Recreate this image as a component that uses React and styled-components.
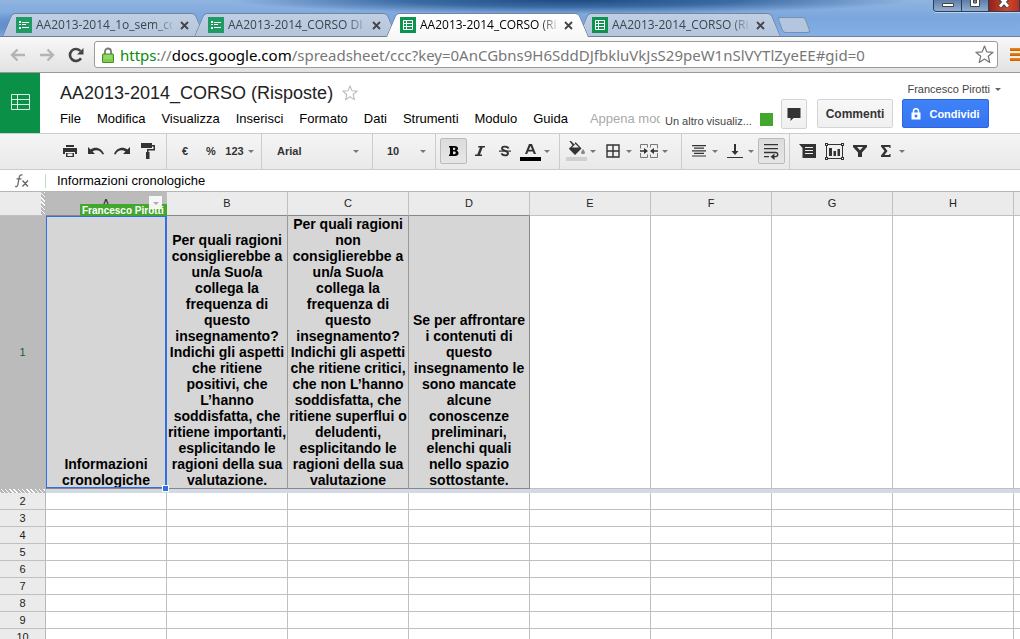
import React from "react";
import styled, { createGlobalStyle, css } from "styled-components";

const SANS = `"Liberation Sans", Arial, sans-serif`;
const UI = `"Open Sans", "Noto Sans", sans-serif`;

const Global = createGlobalStyle`
  * { box-sizing: border-box; }
  html, body { margin: 0; background: #fff; }
  body { font-family: ${SANS}; font-size: 13px; color: #000; }
  button, input, select { font: inherit; color: inherit; margin: 0; padding: 0; border: 0; background: none; }
  button { cursor: pointer; }
  svg { display: block; flex: none; }
  a { color: inherit; text-decoration: none; }
`;

const Page = styled.div`
  display: flex;
  flex-direction: column;
  height: 100vh;
  overflow: hidden;
`;

/* ---------- browser window ---------- */

const TabStrip = styled.header`
  display: flex;
  align-items: flex-end;
  height: 37px;
  flex: none;
  overflow: hidden;
  box-shadow: inset 0 -1px 0 #6d8098;
  background:
    radial-gradient(ellipse 340px 14px at 56% 0, #1d4a80 0, rgba(40, 90, 150, 0.8) 50%, rgba(60, 110, 170, 0) 100%),
    radial-gradient(ellipse 130px 14px at 5% 70%, rgba(50, 100, 165, 0.6), rgba(50, 100, 165, 0) 100%),
    linear-gradient(#91b4e0, #79a6de 50%, #86b0e6);
`;

const TabList = styled.ul`
  display: flex;
  margin: 0;
  padding: 0;
  list-style: none;
`;

const Tab = styled.li`
  position: relative;
  display: flex;
  align-items: center;
  width: 208px;
  height: 24px;
  margin-right: -16px;
  padding: 0 19px 0 16px;
  z-index: ${(p) => (p.$active ? 2 : 1)};
  font-family: ${UI};
  font-size: 12px;
  color: ${(p) => (p.$active ? "#000" : "#3d4450")};

  &::before,
  &::after {
    content: "";
    position: absolute;
    z-index: -1;
    top: 0;
    bottom: ${(p) => (p.$active ? 0 : 1)}px;
    border: 1px solid #75859b;
    border-bottom: 0;
    background: ${(p) => (p.$active ? "linear-gradient(#fff, #f8f8f8)" : "linear-gradient(#c0cfe2, #b4c5dc)")};
  }
  &::before {
    left: 7px;
    right: 50%;
    border-right: 0;
    border-radius: 4px 0 0 0;
    transform: skewX(-23deg);
  }
  &::after {
    left: calc(50% - 20px);
    right: 8px;
    border-left: 0;
    border-radius: 0 4px 0 0;
    transform: skewX(23deg);
  }
`;

const TabTitle = styled.a`
  flex: 1;
  margin: 0 8px 0 4px;
  overflow: hidden;
  white-space: nowrap;
  line-height: 20px;
  mask-image: linear-gradient(90deg, #000 calc(100% - 18px), rgba(0, 0, 0, 0.2));
`;

const TabClose = styled.button`
  display: grid;
  place-items: center;
  width: 9px;
  height: 16px;
`;

const NewTab = styled.button`
  align-self: flex-end;
  width: 28px;
  height: 16px;
  margin: 0 0 4px 12px;
  border: 1px solid #7890b0;
  border-radius: 3px;
  background: #b4c6de;
  transform: skewX(20deg);
`;

const WindowButtons = styled.div`
  display: flex;
  align-self: flex-start;
  height: 12px;
  margin-left: auto;
  border: 1px solid #2b3e58;
  border-width: 0 0 1px 1px;
  border-radius: 0 0 0 4px;
  overflow: hidden;
  box-shadow: 0 1px 0 rgba(255, 255, 255, 0.5);
`;

const WindowButton = styled.button`
  display: flex;
  justify-content: center;
  width: ${(p) => p.$w}px;
  border-right: 1px solid #2b3e58;
  background: ${(p) => (p.$close ? "linear-gradient(90deg, #8e2318, #d0472f 60%, #b8301d)" : "linear-gradient(#5d7ea8, #93add0)")};
`;

const NavBar = styled.nav`
  display: flex;
  align-items: center;
  height: 36px;
  flex: none;
  padding-left: 9px;
  border-bottom: 1px solid #999;
  background: linear-gradient(#f8f8f8, #e2e2e2);
`;

const NavButton = styled.button`
  display: grid;
  place-items: center;
  width: 18px;
  height: 24px;
  margin-right: ${(p) => p.$gap || 11}px;
`;

const Omnibox = styled.div`
  display: flex;
  align-items: center;
  flex: 1;
  min-width: 0;
  height: 27px;
  padding: 0 3px 0 7px;
  border: 1px solid #9b9b9b;
  border-radius: 3px;
  background: #fff;
  font-family: "Noto Sans", "Open Sans", sans-serif;
  font-size: 15px;
`;

const Url = styled.a`
  flex: 1;
  margin-left: 6px;
  overflow: hidden;
  white-space: nowrap;
  line-height: 24px;
  color: #777;
  b { font-weight: 400; color: #000; }
  i { font-style: normal; color: #0b8a0b; }
`;

const MenuButton = styled.button`
  display: flex;
  flex-direction: column;
  gap: 2px;
  width: 10px;
  margin-left: 12px;
  span { height: 3px; background: linear-gradient(#f08a1c, #c85f00); }
`;

/* ---------- document header ---------- */

const DocHeader = styled.header`
  display: flex;
  flex: none;
  height: 60px;
`;

const Logo = styled.a`
  display: grid;
  place-items: center;
  width: 40px;
  background: #0b9147;
`;

const DocMain = styled.div`
  flex: 1;
  min-width: 0;
  padding: 8px 0 0 20px;
`;

const TitleRow = styled.div`
  display: flex;
  align-items: center;
  gap: 9px;
  height: 24px;
`;

const Title = styled.h1`
  margin: 0;
  font-size: 18px;
  font-weight: 400;
  line-height: 24px;
  color: #222;
  white-space: nowrap;
`;

const IconButton = styled.button`
  display: grid;
  place-items: center;
`;

const MenuRow = styled.div`
  display: flex;
  align-items: center;
  gap: 16px;
  height: 27px;
  white-space: nowrap;
`;

const MenuItem = styled.button`
  line-height: 20px;
`;

const SaveState = styled.span`
  flex: 1;
  min-width: 0;
  margin-left: 6px;
  overflow: hidden;
  line-height: 20px;
  color: #aaa;
`;

const DocSide = styled.div`
  flex: none;
  display: flex;
  flex-direction: column;
  padding: 8px 18px 0 5px;
`;

const Account = styled.button`
  display: flex;
  align-items: center;
  align-self: flex-end;
  gap: 4px;
  height: 16px;
  font-size: 11px;
  color: #444;
`;

const ActionRow = styled.div`
  display: flex;
  align-items: flex-start;
  margin: 2px 13px 0 0;
`;

const Viewers = styled.span`
  align-self: flex-end;
  width: 86px;
  margin-right: 9px;
  font-size: 11px;
  line-height: 16px;
  color: #444;
  white-space: nowrap;
`;

const ViewerColor = styled.span`
  align-self: flex-end;
  width: 13px;
  height: 13px;
  margin: 0 8px 3px 0;
  background: #44a72d;
`;

const ActionButton = styled.button`
  display: flex;
  align-items: center;
  justify-content: center;
  gap: 8px;
  width: ${(p) => p.$w}px;
  height: ${(p) => p.$h || 29}px;
  margin-right: ${(p) => p.$gap || 0}px;
  border: 1px solid #d4d4d4;
  border-radius: 2px;
  background: linear-gradient(#f7f7f7, #f0f0f0);
  font-size: 12px;
  font-weight: 700;
  color: #333;
  ${(p) =>
    p.$primary &&
    css`
      border-color: #2f63e0;
      background: linear-gradient(#3f83f8, #3674f0);
      font-size: 11px;
      color: #fff;
    `}
`;

/* ---------- format toolbar ---------- */

const Toolbar = styled.div`
  display: flex;
  flex: none;
  height: 37px;
  border: 1px solid #ccc;
  border-width: 1px 0;
  background: linear-gradient(#f5f5f5, #e9e9e9);
  font-size: 11px;
  font-weight: 700;
  color: #333;
`;

const Group = styled.div`
  display: flex;
  align-items: center;
  gap: ${(p) => p.$gap || 0}px;
  padding: 0 ${(p) => p.$right ?? 5}px 1px ${(p) => p.$left ?? 5}px;
  border-right: ${(p) => (p.$last ? 0 : 1)}px solid #ccc;
`;

const Tool = styled.button`
  display: flex;
  align-items: center;
  justify-content: center;
  gap: 3px;
  width: ${(p) => p.$w || 26}px;
  height: 26px;
  border: 1px solid transparent;
  border-radius: 2px;
  font-weight: 700;
  ${(p) =>
    p.$on &&
    css`
      border-color: #bbb;
      background: linear-gradient(#dcdcdc, #e6e6e6);
    `}
`;

const SplitTool = styled.div`
  display: flex;
  align-items: center;
`;

const Picker = styled.label`
  display: grid;
  align-items: center;
  width: ${(p) => p.$w}px;
  svg { grid-area: 1 / 1; justify-self: end; pointer-events: none; }
`;

const PickerSelect = styled.select`
  grid-area: 1 / 1;
  width: 100%;
  height: 26px;
  appearance: none;
  font-weight: 700;
`;

const FormulaBar = styled.label`
  display: flex;
  align-items: center;
  flex: none;
  height: 22px;
  padding-left: 14px;
  border-bottom: 1px solid #b5b5b5;
`;

const FormulaInput = styled.input`
  flex: 1;
  height: 14px;
  margin-left: 16px;
  padding-left: 11px;
  border-left: 1px solid #b9dfc0;
  outline: 0;
`;

/* ---------- sheet ---------- */

const SheetArea = styled.main`
  flex: 1;
  min-height: 0;
  overflow: hidden;
`;

const Sheet = styled.table`
  width: 100%;
  table-layout: fixed;
  border-collapse: separate;
  border-spacing: 0;
  tr > :last-child { border-right: 0; }
`;

const Col = styled.col`
  width: ${(p) => p.$w}px;
`;

const HATCH = "repeating-linear-gradient(45deg, #fff 0 1px, #b8b8b8 1px 3px)";

const Corner = styled.td`
  padding: 0;
  border-right: 1px solid #b8b8b8;
  border-bottom: 1px solid #c0c0c0;
  background: ${HATCH} right / 4px 100% no-repeat, #ebebeb;
`;

const ColHead = styled.th`
  position: relative;
  height: 24px;
  padding: 0 0 1px;
  border-right: 1px solid #c0c0c0;
  border-bottom: 1px solid ${(p) => (p.$filled ? "#888" : "#c0c0c0")};
  background: ${(p) => (p.$selected ? "#bbb" : "#ebebeb")};
  font-size: 11px;
  font-weight: 400;
  color: #222;
`;

const RowHead = styled.th`
  height: ${(p) => (p.$tall ? 273 : 17)}px;
  padding: 0 0 ${(p) => (p.$tall ? 1 : 0)}px;
  border-right: 1px solid #b8b8b8;
  border-bottom: ${(p) => (p.$tall ? 0 : 1)}px solid #c0c0c0;
  background: ${(p) => (p.$tall ? "#bbb" : "#ebebeb")};
  font-size: 11px;
  font-weight: 400;
  line-height: 16px;
  color: ${(p) => (p.$tall ? "#1c5f2c" : "#222")};
`;

const Cell = styled.td`
  position: relative;
  padding: 0;
  border-right: 1px solid #c0c0c0;
  border-bottom: 1px solid #c0c0c0;
`;

const HeadingCell = styled(Cell)`
  border-color: #888;
  border-right-color: ${(p) => (p.$end ? "#888" : "#9a9a9a")};
  background: #d6d6d6;
  font-size: 14px;
  font-weight: 700;
  line-height: 16px;
  text-align: center;
  vertical-align: bottom;
  white-space: pre;
`;

const FreezeHandle = styled.td`
  height: 4px;
  padding: 0;
  border-right: 1px solid #b8b8b8;
  background: ${HATCH};
`;

const FreezeLine = styled.td`
  padding: 0;
  background: #d3dae5;
`;

const Selection = styled.div`
  position: absolute;
  inset: 0 -1px 0 0;
  z-index: 1;
  border: 1px solid #2f6fe8;
  border-right-width: 2px;
`;

const FillHandle = styled.div`
  position: absolute;
  right: -4px;
  bottom: -5px;
  width: 7px;
  height: 7px;
  border: 1px solid #fff;
  background: #2f6fe8;
`;

const UserTag = styled.span`
  position: absolute;
  right: -1px;
  bottom: -1px;
  width: 87px;
  height: 12px;
  padding-left: 2px;
  overflow: hidden;
  background: #44a72d;
  font-size: 10px;
  font-weight: 700;
  line-height: 13px;
  text-align: left;
  white-space: nowrap;
  color: #fff;
`;

const ColMenu = styled.button`
  position: absolute;
  right: 4px;
  top: 4px;
  display: grid;
  place-items: center;
  width: 13px;
  height: 13px;
  background: rgba(250, 250, 250, 0.95);
`;

/* ---------- icons ---------- */

const Arrow = ({ w = 8, color = "#777" }) => (
  <svg width={w} height="8" viewBox={`${-w / 2} 0 ${w} 8`} aria-hidden="true">
    <path d="M-3 3h6L0 6z" fill={color} />
  </svg>
);

const FormFavicon = () => (
  <svg width="16" height="16" viewBox="0 0 16 16">
    <path d="M0 0h16v16H0z" fill="#1f9a63" />
    <path d="M3 4h2v2H3zM3 7h2v1H3zM3 10h2v2H3zM6 5h7v1H6zM6 7h4v1H6zM6 10h7v1H6z" fill="#fff" />
  </svg>
);

const SheetFavicon = () => (
  <svg width="16" height="16" viewBox="0 0 16 16">
    <path d="M0 0h16v16H0z" fill="#0f9150" />
    <path d="M3.5 3.5h9v9h-9zM3.5 6.5h9M3.5 9.5h9M6.5 3.5v9" fill="none" stroke="#fff" />
  </svg>
);

const Cross = () => (
  <svg width="9" height="9" viewBox="0 0 9 9">
    <path d="M1 1l7 7M8 1L1 8" stroke="#444" strokeWidth="1.8" />
  </svg>
);

const NavArrow = ({ flip }) => (
  <svg width="16" height="14" viewBox="0 0 16 14">
    <path
      d="M15 7H2M7.5 1.5L2 7l5.500 5.500"
      fill="none"
      stroke="#b4b4b4"
      strokeWidth="2.400"
      transform={flip ? "matrix(-1 0 0 1 16 0)" : undefined}
    />
  </svg>
);

const Reload = () => (
  <svg width="16" height="16" viewBox="0 0 16 16">
    <path d="M13 11.200A6 6 0 1 1 12.500 4" fill="none" stroke="#444" strokeWidth="2.600" />
    <path d="M15.500 1v6.500H9z" fill="#444" />
  </svg>
);

const Padlock = () => (
  <svg width="12" height="16" viewBox="0 0 12 16">
    <path d="M3 8V4.500a3 3 0 0 1 6 0V8" fill="none" stroke="#777" strokeWidth="1.800" />
    <rect x="0.500" y="7" width="11" height="8.500" rx="0.500" fill="#7fce4d" stroke="#4a8f2a" />
    <path d="M2 9h8M2 11h8" stroke="#a9e283" />
  </svg>
);

const Star = ({ size, color }) => (
  <svg width={size} height={size} viewBox="0 0 18 18">
    <path
      d="M9 1l2.200 5.500 5.900.4-4.500 3.800 1.400 5.800L9 13.300l-5 3.200 1.400-5.800L.9 6.900l5.900-.4z"
      fill="#fff"
      stroke={color}
      strokeLinejoin="round"
      strokeWidth="1.200"
    />
  </svg>
);

const SheetLogo = () => (
  <svg width="20" height="18" viewBox="0 0 20 18">
    <path d="M1.500.5h18v15h-18zM1.500 5.500h18M1.500 10.500h18M7.500.5v15" fill="none" stroke="#d9f0e2" />
  </svg>
);

const Glyph = ({ w = 16, h = 16, children }) => (
  <svg width={w} height={h} viewBox={`0 0 ${w} ${h}`} fill="#333" aria-hidden="true">
    {children}
  </svg>
);

const Print = () => (
  <Glyph>
    <path d="M4 2h8v2H4zM1 5h14v6h-2V9H3v2H1zM4 10h8v4H4z" />
    <path d="M5.500 10.500h5v2.500h-5z" fill="#eee" />
  </Glyph>
);
const Undo = () => (
  <Glyph>
    <path d="M0 4v7h7L4.500 8.600C8 6.200 12 7 14.500 11.500L16 11C13.500 4.500 7 3 2.600 6.500z" />
  </Glyph>
);
const Redo = () => (
  <Glyph>
    <path d="M16 4v7H9l2.500-2.400C8 6.200 4 7 1.500 11.500L0 11C2.500 4.500 9 3 13.400 6.500z" />
  </Glyph>
);
const Roller = () => (
  <Glyph w={16} h={18}>
    <path d="M1 1h11v5H1zM12 3h3v5.500H8.500V10H7V7h6.500V4.500H12zM6 10h3.500v7H6z" />
  </Glyph>
);
const BoldIcon = () => (
  <Glyph w={10} h={10}>
    <path d="M0 0h5.500C8 0 9 1 9 2.500 9 3.600 8.500 4.300 7.500 4.700 8.800 5 9.500 5.900 9.500 7.200 9.500 9 8.200 10 6 10H0V8.500h1v-7H0zM4 1.700V4h1.200C6.700 4 6.700 1.700 5.200 1.700zM4 5.600v2.700h1.500c1.700 0 1.700-2.700 0-2.700z" fill="#000" fillRule="evenodd" />
  </Glyph>
);
const ItalicIcon = () => (
  <Glyph w={10} h={10}>
    <path d="M3.500 0H10v1.600H7.700L5 8.400h2V10H0V8.400h2.300L5 1.600H3z" />
  </Glyph>
);
const StrikeIcon = () => (
  <Glyph w={12} h={12}>
    <path d="M9.500 3.500C9 1.500 3 .5 3 3.500c0 2.500 6 1.800 6 4.800 0 3-5.500 2.500-6.500 0" fill="none" stroke="#333" strokeWidth="1.900" />
    <path d="M0 5.500h12v1.200H0z" />
  </Glyph>
);
const TextColorIcon = () => (
  <Glyph w={21} h={20}>
    <path d="M9 3h3l4 10h-2.200l-1-2.600H8.200l-1 2.600H5zm1.500 2L8.900 8.800h3.200z" fillRule="evenodd" />
    <path d="M0 16h21v4H0z" fill="#000" />
  </Glyph>
);
const FillIcon = () => (
  <Glyph w={21} h={20}>
    <path d="M3.500.3l1-.8 4 4L9.500 1l6 6.500L9 14 2.800 7.800l3.700-3.500zM9.500 3L6 6.500h7z" fillRule="evenodd" />
    <path d="M17 8c3 4 2.200 5 0 5s-3-1 0-5z" fill="#888" />
    <path d="M0 16h21v4H0z" fill="#d0d0d0" />
  </Glyph>
);
const BordersIcon = () => (
  <Glyph w={14} h={14}>
    <path d="M1 1h12v12H1zM7 1v12M1 7h12" fill="none" stroke="#333" strokeWidth="1.400" />
  </Glyph>
);
const MergeIcon = () => (
  <Glyph w={18} h={14}>
    <path d="M7.500 3.500v-3h-7v4M.5 9v4.500h7v-3M10.500 3.500v-3h7v4M17.500 9v4.500h-7v-3" fill="none" stroke="#777" />
    <path d="M0 6.300h4V4l4 3-4 3V7.700H0zM18 6.300h-4V4l-4 3 4 3V7.700h4z" />
  </Glyph>
);
const AlignIcon = () => (
  <Glyph w={14} h={12}>
    <path d="M0 0h14v1.200H0zM2 2.600h10v1.200H2zM0 5.200h14v1.200H0zM2 7.800h10V9H2zM0 10.400h14v1.200H0z" />
  </Glyph>
);
const BottomIcon = () => (
  <Glyph w={16} h={14}>
    <path d="M7 0h2v7h2.500L8 11 4.500 7H7zM0 13h16v1H0z" />
  </Glyph>
);
const WrapIcon = () => (
  <Glyph w={15} h={17}>
    <path d="M0 1h14v1.200H0zM0 5h14v1.200H0zM0 13h5v1.200H0z" />
    <path d="M0 9.500h11.500c3 0 3 4.200 0 4.200H8.500" fill="none" stroke="#333" strokeWidth="1.300" />
    <path d="M10.500 10.500v6.400L6.500 13.700z" />
  </Glyph>
);
const CommentIcon = () => (
  <Glyph w={18} h={14}>
    <path d="M0 0h17v14H3.500V4z" />
    <path d="M6 3.500h8M6 6.500h8M6 9.500h8" stroke="#eee" fill="none" />
  </Glyph>
);
const ChartIcon = () => (
  <Glyph w={19} h={17}>
    <path d="M1.500 1.500h16v14h-16z" fill="none" stroke="#333" />
    <path d="M0 0h3v3H0zM16 0h3v3h-3zM0 14h3v3H0zM16 14h3v3h-3zM4 5h3v8H4zM8.500 8h2.500v5H8.500zM12.500 6H15v7h-2.500z" />
    <path d="M1 1h1v1H1zM17 1h1v1h-1zM1 15h1v1H1zM17 15h1v1h-1z" fill="#eee" />
  </Glyph>
);
const FilterIcon = () => (
  <Glyph w={14} h={12}>
    <path d="M0 0h14v2L9 7.500V12H5V7.500L0 2zM4 2l3 3.300L10 2z" fillRule="evenodd" />
  </Glyph>
);
const SigmaIcon = () => (
  <Glyph w={10} h={12}>
    <path d="M0 0h9.500v3H8.300V2H3.500l3 4-3 4h4.800V9h1.200v3H0v-1.500L3.500 6 0 1.500z" />
  </Glyph>
);
const ChatIcon = () => (
  <Glyph w={14} h={14}>
    <path d="M.5 1h13v10H6.500L3.500 14v-3h-3z" />
  </Glyph>
);
const ShareLock = () => (
  <svg width="10" height="12" viewBox="0 0 10 12">
    <path d="M2.500 5V3a2.500 2.300 0 0 1 5 0v2" fill="none" stroke="#fff" strokeWidth="1.500" />
    <path d="M.5 4.500h9v7h-9zM5 6.500a1.500 1.500 0 1 0 .01 0z" fill="#fff" fillRule="evenodd" />
  </svg>
);
const FxIcon = () => (
  <svg width="15" height="14" viewBox="0 0 15 14" role="img" aria-label="Formula">
    <path d="M8.500 1.200C6.500.3 5.600 1.300 5.200 3.500L4 10c-.4 2.200-1.200 3-2.800 2.400M2.500 4.800h5M8.500 6.500l5.500 6M14 6.500l-5.500 6" fill="none" stroke="#666" strokeWidth="1.300" />
  </svg>
);
const MinimizeIcon = () => (
  <svg width="12" height="8" viewBox="0 0 12 8">
    <path d="M.5 3.500h11v3H.500z" fill="#fff" stroke="#444" />
  </svg>
);
const MaximizeIcon = () => (
  <svg width="12" height="8" viewBox="0 0 12 8">
    <path d="M1.500-2v8.500h9V-2z" fill="#fff" stroke="#444" />
    <path d="M4.500 0h3v3h-3z" fill="#6d8db5" stroke="#444" />
  </svg>
);
const CloseIcon = () => (
  <svg width="12" height="8" viewBox="0 0 12 8">
    <path d="M2 7l8-9M10 7L2-2" stroke="#444" strokeWidth="4.500" />
    <path d="M2 6.500l8-9M10 6.500L2-2.500" stroke="#fff" strokeWidth="2.800" />
  </svg>
);

/* ---------- data ---------- */

const tabs = [
  { title: "AA2013-2014_1o_sem_corso", Icon: FormFavicon },
  { title: "AA2013-2014_CORSO DI CORSO", Icon: FormFavicon },
  { title: "AA2013-2014_CORSO (Risposte)", Icon: SheetFavicon, active: true },
  { title: "AA2013-2014_CORSO (Risposte)", Icon: SheetFavicon },
];

const menus = ["File", "Modifica", "Visualizza", "Inserisci", "Formato", "Dati", "Strumenti", "Modulo", "Guida"];

const columns = ["A", "B", "C", "D", "E", "F", "G", "H"];

const headings = [
  "Informazioni\ncronologiche",
  "Per quali ragioni\nconsiglierebbe a\nun/a Suo/a\ncollega la\nfrequenza di\nquesto\ninsegnamento?\nIndichi gli aspetti\nche ritiene\npositivi, che\nL’hanno\nsoddisfatta, che\nritiene importanti,\nesplicitando le\nragioni della sua\nvalutazione.",
  "Per quali ragioni\nnon\nconsiglierebbe a\nun/a Suo/a\ncollega la\nfrequenza di\nquesto\ninsegnamento?\nIndichi gli aspetti\nche ritiene critici,\nche non L’hanno\nsoddisfatta, che\nritiene superflui o\ndeludenti,\nesplicitando le\nragioni della sua\nvalutazione",
  "Se per affrontare\ni contenuti di\nquesto\ninsegnamento le\nsono mancate\nalcune\nconoscenze\npreliminari,\nelenchi quali\nnello spazio\nsottostante.",
];

const rows = [2, 3, 4, 5, 6, 7, 8, 9, 10];

const Split = ({ label, children }) => (
  <SplitTool>
    <Tool $w={25} aria-label={label}>{children}</Tool>
    <IconButton aria-label={`${label}: opzioni`}><Arrow /></IconButton>
  </SplitTool>
);

export default function App() {
  return (
    <Page>
      <Global />
      <TabStrip>
        <TabList>
          {tabs.map(({ title, Icon, active }, i) => (
            <Tab key={i} $active={active}>
              <Icon />
              <TabTitle href="#">{title}</TabTitle>
              <TabClose aria-label="Chiudi scheda"><Cross /></TabClose>
            </Tab>
          ))}
        </TabList>
        <NewTab aria-label="Nuova scheda" />
        <WindowButtons>
          <WindowButton $w={28} aria-label="Riduci a icona"><MinimizeIcon /></WindowButton>
          <WindowButton $w={27} aria-label="Ingrandisci"><MaximizeIcon /></WindowButton>
          <WindowButton $w={31} $close aria-label="Chiudi"><CloseIcon /></WindowButton>
        </WindowButtons>
      </TabStrip>

      <NavBar>
        <NavButton aria-label="Indietro"><NavArrow /></NavButton>
        <NavButton aria-label="Avanti"><NavArrow flip /></NavButton>
        <NavButton $gap={9} aria-label="Ricarica"><Reload /></NavButton>
        <Omnibox>
          <Padlock />
          <Url href="#"><i>https</i>://<b>docs.google.com</b>/spreadsheet/ccc?key=0AnCGbns9H6SddDJfbkluVkJsS29peW1nSlVYTlZyeEE#gid=0</Url>
          <IconButton aria-label="Preferiti"><Star size={19} color="#777" /></IconButton>
        </Omnibox>
        <MenuButton aria-label="Menu"><span /><span /><span /></MenuButton>
      </NavBar>

      <DocHeader>
        <Logo href="#" aria-label="Fogli"><SheetLogo /></Logo>
        <DocMain>
          <TitleRow>
            <Title>AA2013-2014_CORSO (Risposte)</Title>
            <IconButton aria-label="Speciale"><Star size={16} color="#bbb" /></IconButton>
          </TitleRow>
          <MenuRow>
            {menus.map((m) => <MenuItem key={m}>{m}</MenuItem>)}
            <SaveState>Appena modificato</SaveState>
          </MenuRow>
        </DocMain>
        <DocSide>
          <Account>Francesco Pirotti <Arrow color="#666" /></Account>
          <ActionRow>
            <Viewers>Un altro visualiz...</Viewers>
            <ViewerColor />
            <ActionButton $w={26} $h={30} $gap={10} aria-label="Chat"><ChatIcon /></ActionButton>
            <ActionButton $w={76} $gap={9}>Commenti</ActionButton>
            <ActionButton $w={87} $primary><ShareLock />Condividi</ActionButton>
          </ActionRow>
        </DocSide>
      </DocHeader>

      <Toolbar>
        <Group $left={57}>
          <Tool aria-label="Stampa"><Print /></Tool>
          <Tool aria-label="Annulla"><Undo /></Tool>
          <Tool aria-label="Ripeti"><Redo /></Tool>
          <Tool aria-label="Copia formato"><Roller /></Tool>
        </Group>
        <Group>
          <Tool>€</Tool>
          <Tool>%</Tool>
          <Tool $w={32}>123<Arrow /></Tool>
        </Group>
        <Group $left={15} $right={12}>
          <Picker $w={83}>
            <PickerSelect aria-label="Carattere"><option>Arial</option></PickerSelect>
            <Arrow />
          </Picker>
        </Group>
        <Group $left={14} $right={8}>
          <Picker $w={40}>
            <PickerSelect aria-label="Dimensione"><option>10</option></PickerSelect>
            <Arrow />
          </Picker>
        </Group>
        <Group $left={4} $right={8}>
          <Tool $w={27} $on aria-label="Grassetto"><BoldIcon /></Tool>
          <Tool $w={25} aria-label="Corsivo"><ItalicIcon /></Tool>
          <Tool aria-label="Barrato"><StrikeIcon /></Tool>
          <Split label="Colore testo"><TextColorIcon /></Split>
        </Group>
        <Group $left={4} $right={12} $gap={3}>
          <Split label="Colore riempimento"><FillIcon /></Split>
          <Split label="Bordi"><BordersIcon /></Split>
          <Split label="Unisci celle"><MergeIcon /></Split>
        </Group>
        <Group $left={4} $right={4} $gap={3}>
          <Split label="Allineamento orizzontale"><AlignIcon /></Split>
          <Split label="Allineamento verticale"><BottomIcon /></Split>
          <Tool $w={27} $on aria-label="Testo a capo"><WrapIcon /></Tool>
        </Group>
        <Group $last>
          <Tool aria-label="Commento"><CommentIcon /></Tool>
          <Tool aria-label="Grafico"><ChartIcon /></Tool>
          <Tool aria-label="Filtro"><FilterIcon /></Tool>
          <Split label="Funzioni"><SigmaIcon /></Split>
        </Group>
      </Toolbar>

      <FormulaBar>
        <FxIcon />
        <FormulaInput defaultValue="Informazioni cronologiche" />
      </FormulaBar>

      <SheetArea>
        <Sheet>
          <colgroup>
            <Col $w={46} />
            {columns.map((c) => <Col key={c} $w={121} />)}
            <col />
          </colgroup>
          <thead>
            <tr>
              <Corner />
              {columns.map((c, i) => (
                <ColHead key={c} scope="col" $selected={i === 0} $filled={i < headings.length}>
                  {c}
                  {i === 0 && (
                    <>
                      <UserTag>Francesco Pirotti</UserTag>
                      <ColMenu aria-label="Menu colonna"><Arrow color="#aaa" /></ColMenu>
                    </>
                  )}
                </ColHead>
              ))}
              <ColHead as="td" />
            </tr>
          </thead>
          <tbody>
            <tr>
              <RowHead scope="row" $tall>1</RowHead>
              {headings.map((text, i) => (
                <HeadingCell key={i} $end={i === headings.length - 1}>
                  {text}
                  {i === 0 && <Selection><FillHandle /></Selection>}
                </HeadingCell>
              ))}
              {columns.slice(headings.length).map((c) => <Cell key={c} />)}
              <Cell />
            </tr>
            <tr>
              <FreezeHandle />
              <FreezeLine colSpan={columns.length + 1} />
            </tr>
            {rows.map((r) => (
              <tr key={r}>
                <RowHead scope="row">{r}</RowHead>
                {columns.map((c) => <Cell key={c} />)}
                <Cell />
              </tr>
            ))}
          </tbody>
        </Sheet>
      </SheetArea>
    </Page>
  );
}
